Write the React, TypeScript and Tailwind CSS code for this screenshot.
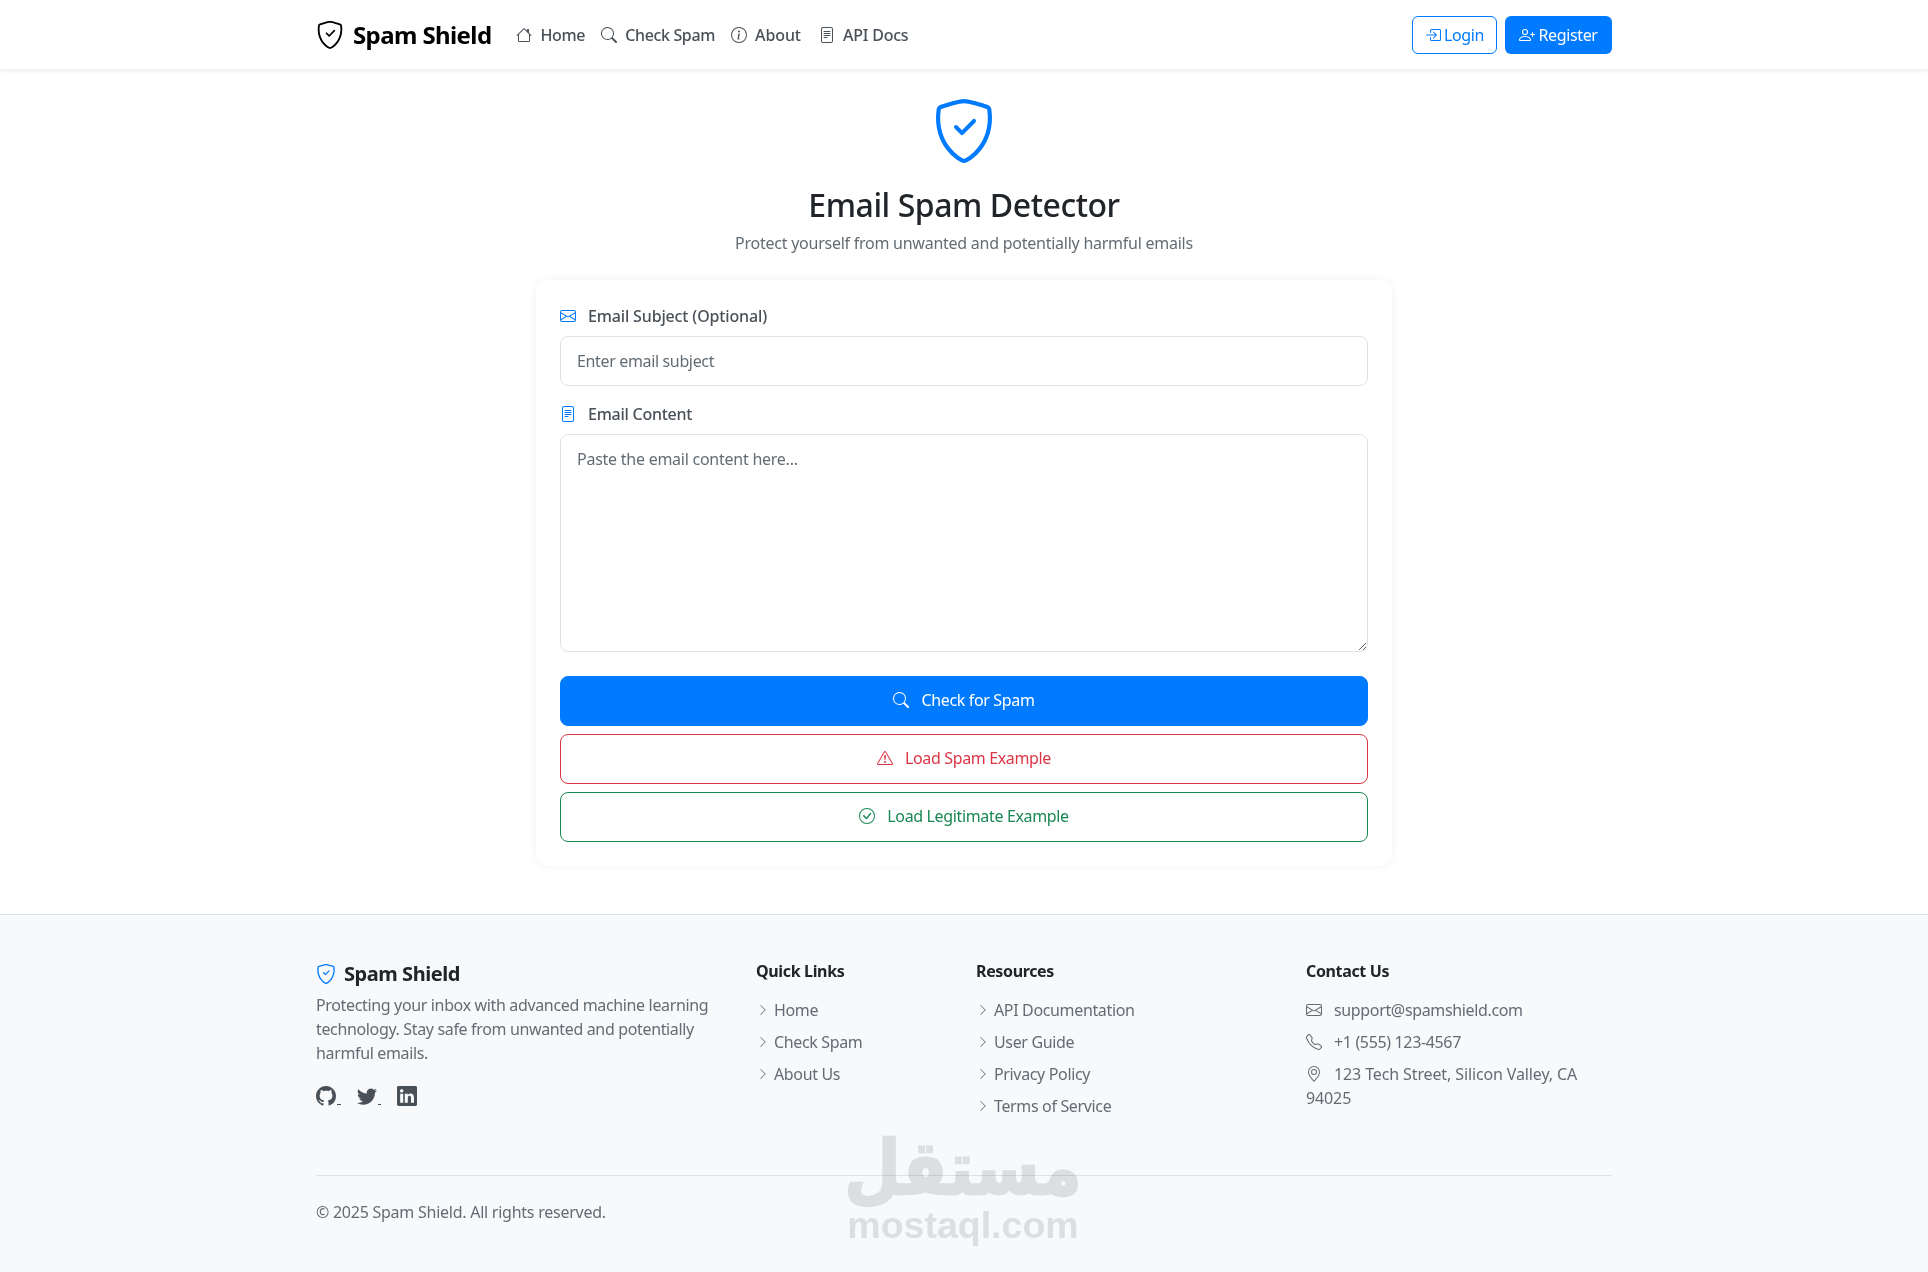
import type { ReactNode } from 'react';
import {
  BsBoxArrowInRight,
  BsCheckCircle,
  BsChevronRight,
  BsEnvelope,
  BsExclamationTriangle,
  BsFileText,
  BsGeoAlt,
  BsGithub,
  BsHouse,
  BsInfoCircle,
  BsLinkedin,
  BsPersonPlus,
  BsSearch,
  BsShieldCheck,
  BsTelephone,
  BsTwitter,
} from 'react-icons/bs';

const quickLinks = ['Home', 'Check Spam', 'About Us'];
const resources = ['API Documentation', 'User Guide', 'Privacy Policy', 'Terms of Service'];

function NavLink({ icon, label, className = '' }: { icon: ReactNode; label: string; className?: string }) {
  return (
    <a className={`flex items-center gap-[8px] font-medium text-[#495057] ${className}`}>
      {icon}
      <span>{label}</span>
    </a>
  );
}

function FooterList({ title, items }: { title: string; items: string[] }) {
  return (
    <div>
      <h5 className="mb-[17px] -mt-[2px] text-base leading-5 font-bold text-[#212529]">{title}</h5>
      <ul className="flex flex-col gap-2">
        {items.map((item) => (
          <li key={item} className="flex h-6 items-center text-[#636c74]">
            <BsChevronRight size={12} className="mr-[5px] ml-[1px]" />
            {item}
          </li>
        ))}
      </ul>
    </div>
  );
}

function ExampleButton({ className, icon, label }: { className: string; icon: ReactNode; label: string }) {
  return (
    <button type="button" className={`flex h-[50px] w-full items-center justify-center gap-[12px] rounded-lg border pb-[2px] ${className}`}>
      {icon}
      {label}
    </button>
  );
}

export default function App() {
  return (
    <div className="relative min-h-[1272px] bg-white font-['Noto_Sans',sans-serif] text-base tracking-[-0.35px] text-[#212529]">
      <nav className="h-[69px] bg-white shadow-[0_2px_4px_rgba(0,0,0,0.08)]">
        <div className="mx-auto flex h-full w-[1296px] items-center justify-between">
          <div className="flex items-center gap-[25px]">
            <a className="flex items-center gap-[9px] text-2xl font-bold tracking-[-0.6px] text-black">
              <BsShieldCheck size={28} />
              <span>Spam Shield</span>
            </a>
            <div className="flex items-center gap-[16px]">
              <NavLink icon={<BsHouse size={16} />} label="Home" />
              <NavLink icon={<BsSearch size={16} />} label="Check Spam" />
              <NavLink icon={<BsInfoCircle size={16} />} label="About" className="tracking-[-0.1px]" />
              <NavLink icon={<BsFileText size={16} />} label="API Docs" className="ml-[2px] tracking-[-0.2px]" />
            </div>
          </div>
          <div className="flex gap-2">
            <button type="button" className="flex h-[38px] w-[85px] items-center justify-center gap-[3px] rounded-md border border-[#007bff] text-[#007bff]">
              <BsBoxArrowInRight size={16} />
              Login
            </button>
            <button type="button" className="flex h-[38px] w-[107px] items-center justify-center gap-[3px] rounded-md bg-[#007bff] text-white">
              <BsPersonPlus size={16} />
              Register
            </button>
          </div>
        </div>
      </nav>

      <main className="flex flex-col items-center pt-[30px] pb-[48px]">
        <BsShieldCheck size={64} className="text-[#007bff]" />
        <h1 className="mt-[18px] text-[32px] leading-[48px] font-medium tracking-[-0.45px]">Email Spam Detector</h1>
        <p className="mt-[2px] leading-6 tracking-[-0.25px] text-[#636c74]">Protect yourself from unwanted and potentially harmful emails</p>

        <form className="mt-[25px] flex w-[856px] flex-col rounded-xl bg-white p-6 shadow-[0_0_10px_rgba(0,0,0,0.06)]">
          <label className="flex h-6 items-center gap-3 font-medium tracking-[-0.15px] text-[#495057]">
            <BsEnvelope size={16} className="text-[#007bff]" />
            Email Subject (Optional)
          </label>
          <input
            placeholder="Enter email subject"
            className="mt-2 h-[50px] rounded-lg border border-[#dee2e6] bg-white px-4 outline-none placeholder:text-[#636c74]"
          />
          <label className="mt-4 flex h-6 items-center gap-3 font-medium tracking-[-0.25px] text-[#495057]">
            <BsFileText size={16} className="text-[#007bff]" />
            Email Content
          </label>
          <textarea
            placeholder="Paste the email content here..."
            className="mt-2 h-[218px] resize-y rounded-lg border border-[#dee2e6] bg-white px-4 py-3 tracking-[-0.25px] outline-none placeholder:text-[#636c74]"
          />
          <div className="mt-6 flex flex-col gap-2">
            <ExampleButton className="border-[#007bff] bg-[#007bff] text-white" icon={<BsSearch size={16} />} label="Check for Spam" />
            <ExampleButton className="border-[#dc3545] text-[#dc3545]" icon={<BsExclamationTriangle size={16} />} label="Load Spam Example" />
            <ExampleButton className="border-[#198754] text-[#198754]" icon={<BsCheckCircle size={16} />} label="Load Legitimate Example" />
          </div>
        </form>
      </main>

      <footer className="h-[358px] border-t border-[#dee2e6] bg-[#f8f9fa] pt-[48px]">
        <div className="mx-auto w-[1296px]">
          <div className="grid h-[212px] grid-cols-[440px_220px_330px_306px]">
            <div>
              <div className="-mt-[1px] flex h-6 items-center gap-[8px] text-xl font-bold tracking-[-0.45px]">
                <BsShieldCheck size={20} className="text-[#007bff]" />
                Spam Shield
              </div>
              <p className="mt-[7px] w-[416px] leading-6 text-[#636c74]">
                Protecting your inbox with advanced machine learning technology. Stay safe from unwanted and potentially harmful emails.
              </p>
              <div className="mt-[21px] flex items-center gap-4 text-[#495057]">
                <a className="flex items-end"><BsGithub size={20} /><span className="mb-[1px] ml-[1px] h-px w-[4px] bg-[#495057]" /></a>
                <a className="flex items-end"><BsTwitter size={20} /><span className="mb-[1px] ml-[1px] h-px w-[3px] bg-[#495057]" /></a>
                <a><BsLinkedin size={20} /></a>
              </div>
            </div>
            <FooterList title="Quick Links" items={quickLinks} />
            <FooterList title="Resources" items={resources} />
            <div>
              <h5 className="mb-[17px] -mt-[2px] text-base leading-5 font-bold">Contact Us</h5>
              <ul className="flex flex-col gap-2 text-[#636c74]">
                <li className="flex h-6 items-center gap-[12px]"><BsEnvelope size={16} />support@spamshield.com</li>
                <li className="flex h-6 items-center gap-[12px]"><BsTelephone size={16} />+1 (555) 123-4567</li>
                <li className="leading-6 tracking-[-0.12px]">
                  <BsGeoAlt size={16} className="mr-[12px] inline align-[-2px]" />
                  123 Tech Street, Silicon Valley, CA 94025
                </li>
              </ul>
            </div>
          </div>
          <div className="border-t border-[#dee2e6] pt-6 leading-6 tracking-[-0.25px] text-[#636c74]">© 2025 Spam Shield. All rights reserved.</div>
        </div>
      </footer>

      {/* mostaql watermark sits over the footer */}
      <div className="pointer-events-none absolute top-[1140px] left-[846px] flex w-[234px] flex-col items-center text-[#e4e4e4] mix-blend-multiply">
        <span className="origin-bottom scale-y-[1.15] font-['DejaVu_Sans',sans-serif] text-[65px] leading-[67px] font-bold tracking-normal [-webkit-text-stroke:2px_#e4e4e4]">مستقل</span>
        <span className="font-['Liberation_Sans',sans-serif] text-[37.5px] leading-[36px] font-bold tracking-normal">mostaql.com</span>
      </div>
    </div>
  );
}
